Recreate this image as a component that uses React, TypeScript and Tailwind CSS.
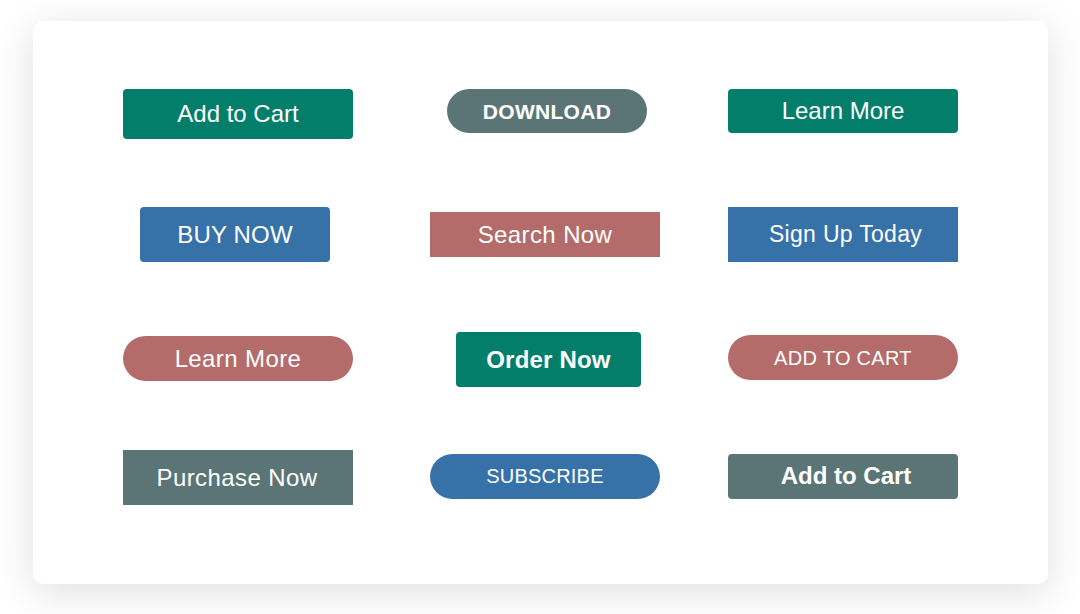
import React from "react";

const F = { fontFamily: '"Liberation Sans", Arial, Helvetica, sans-serif' };

export default function App() {
  return (
    <div className="w-[1080px] h-[614px] bg-white pt-[21px] pl-[33px]" style={F}>
      <div className="w-[1015px] h-[563px] rounded-[10px] bg-white shadow-[0_8px_40px_rgba(0,0,0,0.13)] pt-[68px] pl-[90px]">
        {/* Row 1 */}
        <div className="grid grid-cols-[307px_298px_230px] items-start h-[50px]">
          <div className="w-[230px] flex justify-center">
            <button className="w-[230px] h-[50px] rounded-[4px] bg-[#037e6a] text-white text-[24px] leading-none">Add to Cart</button>
          </div>
          <div className="w-[230px] flex justify-center">
            <button className="ml-[4px] w-[200px] h-[44px] rounded-full bg-[#5b7576] text-white text-[21px] font-bold tracking-[0.3px] leading-none">DOWNLOAD</button>
          </div>
          <div className="w-[230px] flex justify-center">
            <button className="w-[230px] h-[44px] rounded-[4px] bg-[#037e6a] text-white text-[24px] leading-none">Learn More</button>
          </div>
        </div>
        {/* Row 2 */}
        <div className="grid grid-cols-[307px_298px_230px] items-center h-[55px] mt-[68px]">
          <div className="w-[230px] flex justify-center">
            <button className="mr-[6px] w-[190px] h-[55px] rounded-[4px] bg-[#3672a8] text-white text-[24px] tracking-[0.2px] leading-none">BUY NOW</button>
          </div>
          <div className="w-[230px] flex justify-center">
            <button className="w-[230px] h-[45px] bg-[#b46c6a] text-white text-[24px] tracking-[0.4px] leading-none">Search Now</button>
          </div>
          <div className="w-[230px] flex justify-center">
            <button className="w-[230px] h-[55px] pl-[5px] bg-[#3672a8] text-white text-[23px] tracking-[0.3px] leading-none">Sign Up Today</button>
          </div>
        </div>
        {/* Row 3 */}
        <div className="grid grid-cols-[307px_298px_230px] items-center h-[55px] mt-[69px]">
          <div className="w-[230px] flex justify-center">
            <button className="w-[230px] h-[45px] rounded-full bg-[#b46c6a] text-white text-[24px] tracking-[0.4px] leading-none">Learn More</button>
          </div>
          <div className="w-[230px] flex justify-center">
            <button className="mt-[1px] -mb-[1px] ml-[7px] w-[185px] h-[55px] rounded-[4px] bg-[#037e6a] text-white text-[24px] font-bold tracking-[0.2px] leading-none">Order Now</button>
          </div>
          <div className="w-[230px] flex justify-center">
            <button className="mb-[2px] w-[230px] h-[45px] rounded-full bg-[#b46c6a] text-white text-[20px] tracking-[0.3px] leading-none">ADD TO CART</button>
          </div>
        </div>
        {/* Row 4 */}
        <div className="grid grid-cols-[307px_298px_230px] items-center h-[55px] mt-[63px]">
          <div className="w-[230px] flex justify-center">
            <button className="mt-[1px] -mb-[1px] w-[230px] h-[55px] pr-[2px] bg-[#5b7576] text-white text-[24px] tracking-[0.4px] leading-none">Purchase Now</button>
          </div>
          <div className="w-[230px] flex justify-center">
            <button className="mb-[1px] w-[230px] h-[45px] rounded-full bg-[#3672a8] text-white text-[20px] tracking-[0.2px] leading-none">SUBSCRIBE</button>
          </div>
          <div className="w-[230px] flex justify-center">
            <button className="mb-[1px] w-[230px] h-[45px] pl-[6px] rounded-[4px] bg-[#5b7576] text-white text-[24px] font-bold leading-none">Add to Cart</button>
          </div>
        </div>
      </div>
    </div>
  );
}
